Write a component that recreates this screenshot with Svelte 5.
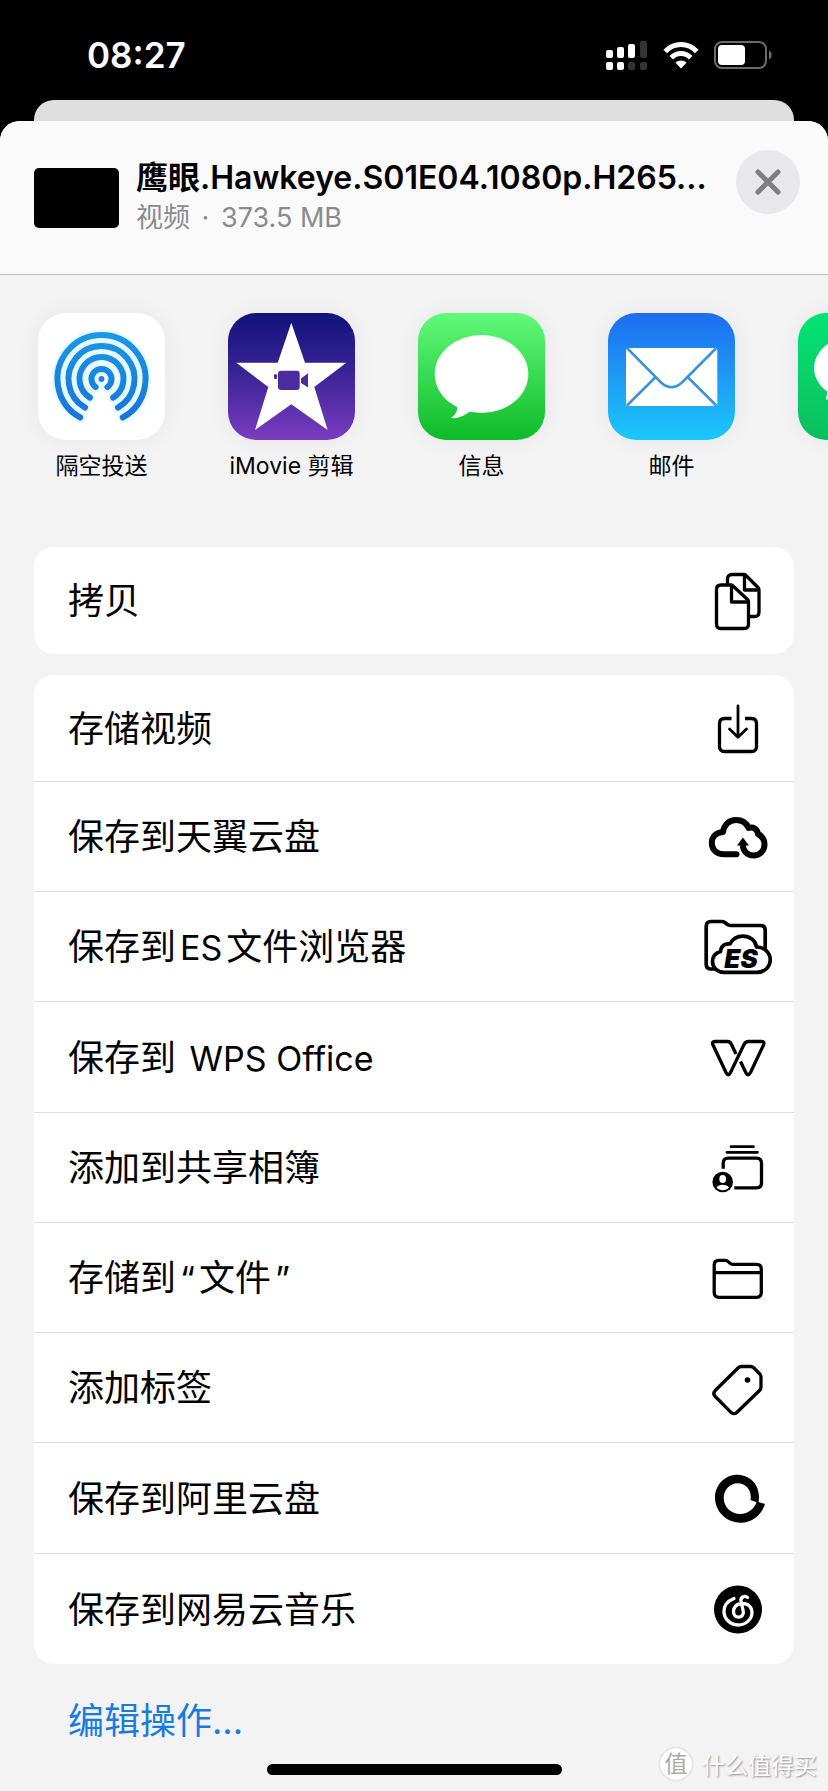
<script>
  const apps = [
    { id: "airdrop", name: "隔空投送" },
    { id: "imovie", name: "iMovie 剪辑" },
    { id: "messages", name: "信息" },
    { id: "mail", name: "邮件" },
    { id: "wechat", name: "" },
  ];
  const groups = [
    [{ icon: "copy", label: "拷贝" }],
    [
      { icon: "save", label: "存储视频" },
      { icon: "cloud", label: "保存到天翼云盘" },
      { icon: "es", label: "保存到ES文件浏览器" },
      { icon: "wps", label: "保存到 WPS Office" },
      { icon: "album", label: "添加到共享相簿" },
      { icon: "folder", label: "存储到“文件”" },
      { icon: "tag", label: "添加标签" },
      { icon: "aliyun", label: "保存到阿里云盘" },
      { icon: "netease", label: "保存到网易云音乐" },
    ],
  ];

  // odd parts are latin text or quotes
  const split = (label) => label.split(/([A-Za-z ]+|[“”])/);

  // open rings of the AirDrop icon: radius and half of the gap in degrees
  const rings = [
    [44, 29],
    [33, 30],
    [22, 32],
    [10, 36],
  ].map(([r, deg]) => {
    const a = (deg * Math.PI) / 180;
    const dx = r * Math.sin(a);
    const y = 66 + r * Math.cos(a);
    return `M${63.5 - dx} ${y}A${r} ${r} 0 1 1 ${63.5 + dx} ${y}`;
  });
</script>

<main>
  <div class="status">
    <span class="time">08:27</span>
    <div class="indicators">
      <svg width="42" height="30" viewBox="0 0 42 30" aria-hidden="true">
        <g fill="#fff">
          <rect x="0" y="10" width="7" height="8" rx="2" />
          <rect x="11" y="7" width="7" height="11" rx="2" />
          <rect x="22" y="4" width="7" height="14" rx="2" />
          <rect x="0" y="22" width="7" height="8" rx="2" />
          <rect x="11" y="22" width="7" height="8" rx="2" />
        </g>
        <g fill="#333">
          <rect x="34" y="1" width="7" height="17" rx="2" />
          <rect x="22" y="22" width="7" height="8" rx="2" />
          <rect x="34" y="22" width="7" height="8" rx="2" />
        </g>
      </svg>
      <svg width="36" height="28" viewBox="0 0 36 28" aria-hidden="true">
        <g fill="none" stroke="#fff" stroke-width="5">
          <path d="M2.2 10.5C11 1.3 25 1.3 33.8 10.5" />
          <path d="M8.3 16.8C14 11.2 22 11.2 27.7 16.8" />
        </g>
        <path d="M18 27.5L12.5 21.7C15.5 18.7 20.5 18.7 23.5 21.7Z" fill="#fff" />
      </svg>
      <svg width="58" height="28" viewBox="0 0 58 28" aria-hidden="true">
        <rect x="1" y="1" width="51" height="26" rx="7" fill="none" stroke="#6b6b6b" stroke-width="2" />
        <rect x="4" y="4" width="27" height="20" rx="4" fill="#fff" />
        <path d="M55 9.5C58.5 10.5 58.5 17.5 55 18.5Z" fill="#6b6b6b" />
      </svg>
    </div>
  </div>
  <div class="behind"></div>

  <section class="sheet">
    <header>
      <div class="thumb"></div>
      <div class="info">
        <h1>鹰眼.Hawkeye.S01E04.1080p.H265...</h1>
        <p>视频 <span class="dot">·</span> 373.5 MB</p>
      </div>
      <button class="close" aria-label="关闭">
        <svg width="26" height="26" viewBox="0 0 26 26">
          <path d="M3 3L23 23M23 3L3 23" stroke="#7d7d82" stroke-width="5" stroke-linecap="round" />
        </svg>
      </button>
    </header>

    <div class="apps">
      {#each apps as app}
        <button class="app">
          <svg class="appIcon {app.id}" viewBox="0 0 127 127" aria-hidden="true">
            {#if app.id === "airdrop"}
              <defs>
                <linearGradient id="ring" x1="0" y1="20" x2="0" y2="108" gradientUnits="userSpaceOnUse">
                  <stop offset="0" stop-color="#1a98e6" />
                  <stop offset="1" stop-color="#1873d8" />
                </linearGradient>
              </defs>
              <g fill="none" stroke="#e4faff" stroke-width="11" stroke-linecap="round">
                {#each rings as d}<path {d} />{/each}
              </g>
              <g fill="none" stroke="url(#ring)" stroke-width="6" stroke-linecap="round">
                {#each rings as d}<path {d} />{/each}
              </g>
              <circle cx="63.5" cy="66" r="3" fill="#1686e0" />
            {:else if app.id === "imovie"}
              <path
                d="M63.3 9.7L77 49.7H118.3L86.3 74L99.7 117L63.3 91.3L27 117L40.3 74L8.3 49.7H49.7Z"
                fill="#fff"
              />
              <g fill="#4a2ba0">
                <rect x="50" y="57.7" width="21.7" height="19.3" rx="3" />
                <path d="M80 60.3L73 65.5V70L80 74.5Z" />
                <rect x="46" y="61.3" width="3" height="4.7" rx="1" />
              </g>
            {:else if app.id === "messages"}
              <ellipse cx="63.5" cy="61" rx="46.8" ry="39" fill="#fff" />
              <path d="M38 91C41 97 37.5 102 33 105C41 106 47 102 52 98.5Z" fill="#fff" />
            {:else if app.id === "mail"}
              <rect x="18" y="35" width="91.3" height="58" rx="2" fill="#fff" />
              <g fill="none" stroke="#3a93dc" stroke-width="2.5">
                <path d="M19 35L53 69.5Q63.6 79 74 69.5L108.3 35" />
                <path d="M19 92.5L47.7 64M79.6 64L108.3 92.5" />
              </g>
            {:else}
              <ellipse cx="51" cy="55" rx="35" ry="30" fill="#fff" />
              <path d="M30 74L28 87L41 79Z" fill="#fff" />
            {/if}
          </svg>
          <span>{app.name}</span>
        </button>
      {/each}
    </div>

    {#each groups as group}
      <div class="group">
        {#each group as action}
          <button class="action">
            <span class="label"
              >{#each split(action.label) as part, i}{#if i % 2}<span class="latin">{part}</span
                  >{:else}{part}{/if}{/each}</span
            >
            <svg
              width="72"
              height="72"
              viewBox="0 0 72 72"
              fill="none"
              stroke="#000"
              stroke-width="3.3"
              stroke-linecap="round"
              stroke-linejoin="round"
              aria-hidden="true"
            >
              {#if action.icon === "copy"}
                <path d="M25.5 19V14Q25.5 9.5 30 9.5H41.5Q43 9.5 44 10.5L56 22.5Q57 23.5 57 25V47Q57 51.5 52.5 51.5H48" />
                <path d="M42.5 10V25H56.5" />
                <path d="M19 20H28.5Q30 20 31 21L45.5 34.5Q46.5 35.5 46.5 37V59Q46.5 63.5 42 63.5H19Q14.5 63.5 14.5 59V24.5Q14.5 20 19 20Z" />
                <path d="M29.5 20.5V37H46" />
              {:else if action.icon === "save"}
                <path stroke-linecap="butt" d="M29.5 26.5H22.5Q17.5 26.5 17.5 31.5V54.5Q17.5 59.5 22.5 59.5H49.5Q54.5 59.5 54.5 54.5V31.5Q54.5 26.5 49.5 26.5H43" />
                <path stroke-width="2.8" d="M36 14V45M27.5 37L36 45.3L44.5 37" />
              {:else if action.icon === "cloud"}
                <path
                  stroke-width="6"
                  d="M34.5 53.3H22C14.5 53.3 9.8 48.5 9.8 42C9.8 36 14 31.5 21 31C22 24 27 19 34 19C40 19 44.5 22 46.5 27C51 25.5 55.5 28 56 33C60 35 62.5 39 62.5 43.5C62.5 50 57.5 54.5 51.7 54.5C45 54.5 40.9 49.5 40.9 44"
                />
                <path d="M40.9 36.5L35 44.5H47Z" fill="#000" stroke="none" />
              {:else if action.icon === "es"}
                <path
                  stroke-width="3.7"
                  d="M12 58H9Q4.2 58 4.2 53.2V15.3Q4.2 10.5 9 10.5H20Q22 10.5 23.5 12L25 13.2Q26.5 14.5 28.5 14.5H58.5Q63.2 14.5 63.2 19.2V40"
                />
                <path
                  fill="#fff"
                  stroke-width="3.7"
                  d="M22 61.3C15 61.3 10.5 56.5 10.5 50.5C10.5 45.5 13.5 42 18.5 40.5C19 35 23 32 28 33C30.5 28 35 25.2 41 25.2C48 25.2 53.5 29.5 54.5 36C62 36 68.2 41.5 68.2 48.7C68.2 56 62.5 61.3 55 61.3Z"
                />
                <text class="esMark" x="39" y="57" text-anchor="middle">ES</text>
              {:else if action.icon === "wps"}
                <path
                  stroke-linecap="butt"
                  d="M34 33L29.5 23.5Q28.2 20.5 25.5 20.5H13Q9.5 20.5 11 24L24 51.5Q26.3 56 28.5 51.5L42 23.5Q43.5 20.5 46.5 20.5H59.5Q63 20.5 61.5 24L48.5 51.5Q46 56 43.8 51.5L38.5 40.5"
                />
              {:else if action.icon === "album"}
                <path stroke-width="2.8" d="M29 14.7H51.5M25 20.3H55.5" />
                <path stroke-linecap="butt" d="M21.2 36.7V31.2Q21.2 26.2 26.2 26.2H54.5Q59.5 26.2 59.5 31.2V50.8Q59.5 55.8 54.5 55.8H32.3" />
                <circle cx="20.7" cy="50" r="10.3" fill="#000" stroke="none" />
                <ellipse cx="20.7" cy="47" rx="3.4" ry="4" fill="#fff" stroke="none" />
                <path d="M14.5 55.5C16.5 51.8 25 51.8 27 55.5C24 59 17.5 59 14.5 55.5Z" fill="#fff" stroke="none" />
              {:else if action.icon === "folder"}
                <path d="M17 18.3H23Q25 18.3 26.5 19.8L27.5 20.8Q29 22.3 31 22.3H54.5Q59.3 22.3 59.3 27V50.5Q59.3 55.3 54.5 55.3H17Q12.2 55.3 12.2 50.5V23Q12.2 18.3 17 18.3ZM12.2 30.7H59.3" />
              {:else if action.icon === "tag"}
                <path d="M39.5 14.5H48.5Q50.5 14.5 52 16L57.8 22Q59 23.3 59 25V35Q59 37 57.5 38.5L35 60.3Q32 63 29 60.3L13.2 44.5Q10.5 41.5 13.2 38.5L36 16Q37.5 14.5 39.5 14.5Z" />
                <circle cx="45.5" cy="28" r="2.8" fill="#000" stroke="none" />
              {:else if action.icon === "aliyun"}
                <path
                  fill="#000"
                  fill-rule="evenodd"
                  stroke="none"
                  d="M63 42C59.5 53 50 60.7 39 60.7C24.5 60.7 13 49.5 13 35.5C13 23 23 12.7 35 12.7C47.5 12.7 57 22 57 35Q57 38 56.5 40ZM54.5 40.3L48.5 38C50.3 29 44.5 21.3 35.5 21.3C28 21.3 21.7 28 21.7 36C21.7 45 29 52 38.5 52C46 52 52 47 54.5 40.3Z"
                />
              {:else}
                <circle cx="36" cy="36.5" r="24" fill="#000" stroke="none" />
                <path
                  stroke="#fff"
                  d="M32 25.5C25.5 28 22 33 22 38.5C22 46 28.5 52 36 52C43.5 52 50 46.5 50 39.5C50 34 46 30.5 40 30.5C34.5 30.5 31.5 34.5 31.5 38.5C31.5 42 33.5 44.2 36.5 44.2C39.5 44.2 41.8 42 41.3 38.5L39 28C38.5 24.5 42 22 45.5 24.5"
                />
              {/if}
            </svg>
          </button>
        {/each}
      </div>
    {/each}

    <footer>
      <button class="edit">编辑操作...</button>
      <div class="bottom">
        <div class="home"></div>
        <div class="watermark">
          <span class="badge">值</span>
          <span>什么值得买</span>
        </div>
      </div>
    </footer>
  </section>
</main>

<style>
  :global(body) {
    background: #000;
  }
  main {
    font-family: Inter, "Noto Sans CJK SC", sans-serif;
    color: #000;
    overflow: hidden;
  }
  button {
    font: inherit;
    color: inherit;
    border: none;
    background: none;
    padding: 0;
    cursor: pointer;
  }
  svg {
    display: block;
    flex: none;
  }
  .status {
    height: 100px;
    padding: 10px 56px 0 87px;
    box-sizing: border-box;
    display: flex;
    align-items: center;
    justify-content: space-between;
    color: #fff;
  }
  .time {
    font-size: 35px;
    font-weight: 600;
  }
  .indicators {
    display: flex;
    align-items: center;
    gap: 15px;
  }
  .behind {
    height: 41px;
    margin: 0 34px -20px;
    background: #dfdfdf;
    border-radius: 20px 20px 0 0;
  }
  .sheet {
    background: #f3f3f4;
    border-radius: 20px 20px 0 0;
    overflow: hidden;
  }
  header {
    height: 154px;
    box-sizing: border-box;
    padding: 0 28px 0 34px;
    display: flex;
    align-items: center;
    background: #fafafa;
    border-bottom: 1px solid #b9b9bd;
  }
  .thumb {
    flex: none;
    width: 85px;
    height: 60px;
    border-radius: 5px;
    background: #000;
  }
  .info {
    flex: 1;
    min-width: 0;
    margin-left: 17px;
  }
  h1 {
    margin: 0;
    font-size: 32px;
    line-height: 40px;
    font-weight: 600;
    white-space: nowrap;
  }
  p {
    margin: 0;
    font-size: 27px;
    line-height: 40px;
    color: #8a8a8e;
  }
  .dot {
    margin: 0 4px;
  }
  .close {
    flex: none;
    width: 64px;
    height: 64px;
    margin-bottom: 32px;
    border-radius: 50%;
    background: #e8e8eb;
    display: grid;
    place-items: center;
  }
  .apps {
    display: flex;
    gap: 63px;
    height: 272px;
    box-sizing: border-box;
    padding: 38px 0 0 38px;
    overflow: hidden;
  }
  .app {
    flex: none;
    width: 127px;
    display: flex;
    flex-direction: column;
    align-items: center;
    gap: 9px;
    font-size: 23px;
    line-height: 34px;
    white-space: nowrap;
  }
  .appIcon {
    width: 127px;
    height: 127px;
    border-radius: 28px;
    box-shadow: 0 0 24px rgba(0, 0, 0, 0.05);
  }
  .airdrop {
    background: #fff;
  }
  .imovie {
    background: linear-gradient(#12127a, #3d2597 50%, #7a3cc0);
  }
  .messages {
    background: linear-gradient(#62f97a, #0dbb28);
  }
  .mail {
    background: linear-gradient(#1e6cf0, #1cc8fb);
  }
  .wechat {
    background: linear-gradient(#03e373, #0cbf5e);
  }
  .group {
    margin: 0 34px 21px;
    background: #fff;
    border-radius: 20px;
    overflow: hidden;
  }
  .action {
    width: 100%;
    height: 110px;
    box-sizing: border-box;
    padding: 0 20px 0 34px;
    display: flex;
    align-items: center;
    justify-content: space-between;
    border-bottom: 1px solid #dedee0;
    text-align: left;
  }
  .action:nth-child(4n) {
    height: 111px;
  }
  .action:last-child {
    border-bottom: none;
  }
  .action:first-child {
    height: 107px;
  }
  .action:active {
    background: #e5e5ea;
  }
  .label {
    padding-bottom: 5px;
    font-size: 36px;
  }
  .latin {
    margin: 0 4px;
    font-size: 34px;
  }
  .esMark {
    font-size: 26px;
    font-weight: 900;
    font-style: italic;
    fill: #000;
    stroke: none;
  }
  .edit {
    margin: 10px 0 0 68px;
    font-size: 36px;
    line-height: 52px;
    color: #1a7bdc;
  }
  .bottom {
    display: grid;
    grid-template-columns: 1fr 295px 1fr;
    align-items: center;
    height: 44px;
  }
  .home {
    grid-column: 2;
    height: 11px;
    border-radius: 6px;
    background: #000;
  }
  .watermark {
    justify-self: end;
    margin: 0 11px 10px 0;
    display: flex;
    align-items: center;
    gap: 10px;
    font-size: 23px;
    color: #fff;
    text-shadow: 1px 1px 2px #888;
    white-space: nowrap;
  }
  .badge {
    width: 32px;
    height: 32px;
    border-radius: 50%;
    background: #fff;
    box-shadow: 0 0 2px #aaa;
    color: #aaa;
    text-shadow: none;
    line-height: 32px;
    text-align: center;
  }
</style>
